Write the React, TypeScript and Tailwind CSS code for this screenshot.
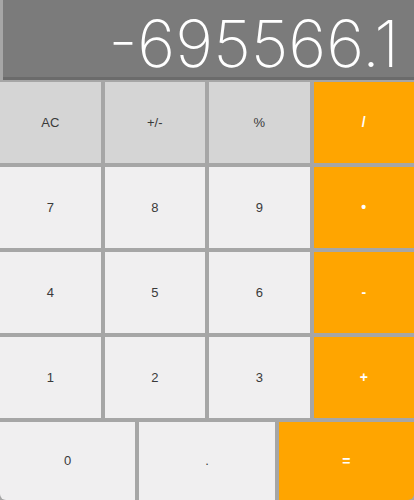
import React from "react";

const Btn = ({ label, kind, extra = "" }: { label: string; kind: "top" | "num" | "op"; extra?: string }) => {
  const cls =
    kind === "top"
      ? "bg-[#d5d5d5] text-[#3a3a3a]"
      : kind === "num"
      ? "bg-[#f0eff0] text-[#3a3a3a]"
      : "bg-[#ffa500] text-white font-bold text-[14px]";
  return (
    <div className={`flex items-center justify-center text-[13px] ${cls} ${extra}`}>{label}</div>
  );
};

export default function App() {
  return (
    <div
      className="w-[414px] h-[500px] bg-[#a6a6a6] flex flex-col overflow-hidden"
      style={{ fontFamily: "'Liberation Sans', Arial, sans-serif" }}
    >
      <div className="h-[80px] pl-[3px] bg-[#a6a6a6] shrink-0">
        <div className="h-full bg-[#7b7b7b] border-b-[3px] border-[#6b6b6b] flex items-start justify-end pr-[15px] pt-[11px]">
          <span
            className="text-white text-[65px] leading-none font-extralight tracking-[0px] whitespace-nowrap"
            style={{ fontFamily: "Inter, 'Noto Sans', sans-serif" }}
          >
            -695566.1
          </span>
        </div>
      </div>
      <div className="flex-1 grid grid-cols-4 grid-rows-4 gap-[4px] pt-[2px]">
        <Btn label="AC" kind="top" />
        <Btn label="+/-" kind="top" />
        <Btn label="%" kind="top" />
        <Btn label="/" kind="op" />
        <Btn label="7" kind="num" />
        <Btn label="8" kind="num" />
        <Btn label="9" kind="num" />
        <Btn label="•" kind="op" />
        <Btn label="4" kind="num" />
        <Btn label="5" kind="num" />
        <Btn label="6" kind="num" />
        <Btn label="-" kind="op" />
        <Btn label="1" kind="num" />
        <Btn label="2" kind="num" />
        <Btn label="3" kind="num" />
        <Btn label="+" kind="op" />
      </div>
      <div className="h-[82px] shrink-0 grid grid-cols-3 gap-[4px] pt-[4px]">
        <Btn label="0" kind="num" extra="rounded-bl-[6px]" />
        <Btn label="." kind="num" />
        <Btn label="=" kind="op" extra="rounded-br-[6px]" />
      </div>
    </div>
  );
}
